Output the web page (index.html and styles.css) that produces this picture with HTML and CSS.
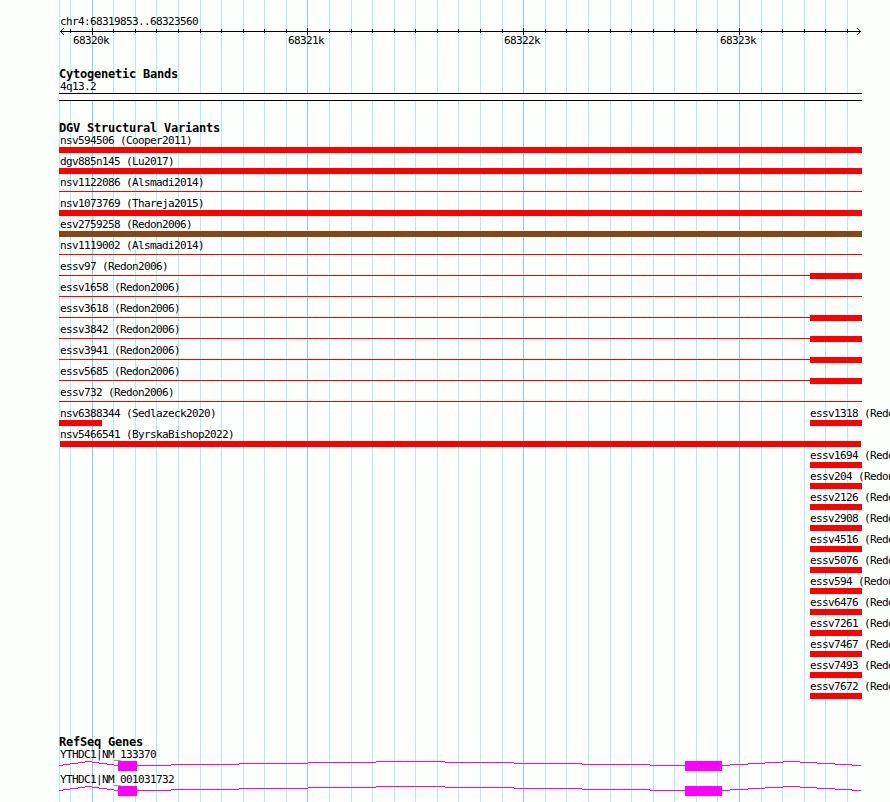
FILE: index.html
```
<!DOCTYPE html>
<html lang="en">
<head>
<meta charset="utf-8">
<title>chr4:68319853..68323560</title>
<link rel="stylesheet" href="styles.css">
</head>
<body>
<svg class="grid" width="890" height="802" shape-rendering="crispEdges" aria-hidden="true">
<path class="minor" d="M59.5 0V802M70.5 0V802M113.5 0V802M135.5 0V802M156.5 0V802M178.5 0V802M200.5 0V802M221.5 0V802M243.5 0V802M264.5 0V802M286.5 0V802M329.5 0V802M351.5 0V802M372.5 0V802M394.5 0V802M415.5 0V802M437.5 0V802M458.5 0V802M480.5 0V802M502.5 0V802M545.5 0V802M566.5 0V802M588.5 0V802M610.5 0V802M631.5 0V802M653.5 0V802M674.5 0V802M696.5 0V802M717.5 0V802M761.5 0V802M782.5 0V802M804.5 0V802M825.5 0V802M847.5 0V802"/>
<path class="major" d="M92.5 0V802M307.5 0V802M523.5 0V802M739.5 0V802"/>
</svg>
<main class="tracks">
<header class="ruler">
<div class="label">chr4:68319853..68323560</div>
<svg class="axis" width="803" height="9" viewBox="59 27 803 9" shape-rendering="crispEdges" aria-hidden="true">
<path d="M60 31.5H861M70.5 29V33M113.5 29V33M135.5 29V33M156.5 29V33M178.5 29V33M200.5 29V33M221.5 29V33M243.5 29V33M264.5 29V33M286.5 29V33M329.5 29V33M351.5 29V33M372.5 29V33M394.5 29V33M415.5 29V33M437.5 29V33M458.5 29V33M480.5 29V33M502.5 29V33M545.5 29V33M566.5 29V33M588.5 29V33M610.5 29V33M631.5 29V33M653.5 29V33M674.5 29V33M696.5 29V33M717.5 29V33M761.5 29V33M782.5 29V33M804.5 29V33M825.5 29V33M847.5 29V33M92.5 28V35M307.5 28V35M523.5 28V35M739.5 28V35"/>
<path d="M61 30.5H62M62 29.5H63M63 28.5H64M61 32.5H62M62 33.5H63M63 34.5H64M859 30.5H860M858 29.5H859M857 28.5H858M859 32.5H860M858 33.5H859M857 34.5H858"/>
</svg>
<div class="scale"><span>68320k</span><span>68321k</span><span>68322k</span><span>68323k</span></div>
</header>
<section class="cyto">
<h2>Cytogenetic Bands</h2>
<div class="label">4q13.2</div>
<div class="band"></div>
</section>
<section class="variants">
<h2>DGV Structural Variants</h2>
<div class="row"><div class="wide"><div class="label">nsv594506 (Cooper2011)</div><div class="bar"></div></div></div>
<div class="row"><div class="wide"><div class="label">dgv885n145 (Lu2017)</div><div class="bar"></div></div></div>
<div class="row"><div class="wide"><div class="label">nsv1122086 (Alsmadi2014)</div><div class="bar thin"></div></div></div>
<div class="row"><div class="wide"><div class="label">nsv1073769 (Thareja2015)</div><div class="bar"></div></div></div>
<div class="row"><div class="wide"><div class="label">esv2759258 (Redon2006)</div><div class="bar brown"></div></div></div>
<div class="row"><div class="wide"><div class="label">nsv1119002 (Alsmadi2014)</div><div class="bar thin"></div></div></div>
<div class="row"><div class="wide"><div class="label">essv97 (Redon2006)</div><div class="bar thin tip"></div></div></div>
<div class="row"><div class="wide"><div class="label">essv1658 (Redon2006)</div><div class="bar thin"></div></div></div>
<div class="row"><div class="wide"><div class="label">essv3618 (Redon2006)</div><div class="bar thin tip"></div></div></div>
<div class="row"><div class="wide"><div class="label">essv3842 (Redon2006)</div><div class="bar thin tip"></div></div></div>
<div class="row"><div class="wide"><div class="label">essv3941 (Redon2006)</div><div class="bar thin tip"></div></div></div>
<div class="row"><div class="wide"><div class="label">essv5685 (Redon2006)</div><div class="bar thin tip"></div></div></div>
<div class="row"><div class="wide"><div class="label">essv732 (Redon2006)</div><div class="bar thin"></div></div></div>
<div class="row"><div class="left"><div class="label">nsv6388344 (Sedlazeck2020)</div><div class="bar short"></div></div><div class="right"><div class="label">essv1318 (Redon2006)</div><div class="bar"></div></div></div>
<div class="row"><div class="wide"><div class="label">nsv5466541 (ByrskaBishop2022)</div><div class="bar inset"></div></div></div>
<div class="row"><div class="right"><div class="label">essv1694 (Redon2006)</div><div class="bar"></div></div></div>
<div class="row"><div class="right"><div class="label">essv204 (Redon2006)</div><div class="bar"></div></div></div>
<div class="row"><div class="right"><div class="label">essv2126 (Redon2006)</div><div class="bar"></div></div></div>
<div class="row"><div class="right"><div class="label">essv2908 (Redon2006)</div><div class="bar"></div></div></div>
<div class="row"><div class="right"><div class="label">essv4516 (Redon2006)</div><div class="bar"></div></div></div>
<div class="row"><div class="right"><div class="label">essv5076 (Redon2006)</div><div class="bar"></div></div></div>
<div class="row"><div class="right"><div class="label">essv594 (Redon2006)</div><div class="bar"></div></div></div>
<div class="row"><div class="right"><div class="label">essv6476 (Redon2006)</div><div class="bar"></div></div></div>
<div class="row"><div class="right"><div class="label">essv7261 (Redon2006)</div><div class="bar"></div></div></div>
<div class="row"><div class="right"><div class="label">essv7467 (Redon2006)</div><div class="bar"></div></div></div>
<div class="row"><div class="right"><div class="label">essv7493 (Redon2006)</div><div class="bar"></div></div></div>
<div class="row"><div class="right"><div class="label">essv7672 (Redon2006)</div><div class="bar"></div></div></div>
</section>
<section class="genes">
<h2>RefSeq Genes</h2>
<div class="gene"><div class="label">YTHDC1|NM_133370</div>
<svg width="803" height="10" viewBox="59 761 803 10" shape-rendering="crispEdges" aria-hidden="true"><defs><g id="model">
<path class="intron" d="M59 765.5H63M63 764.5H70M70 763.5H78M78 762.5H85M85 761.5H92M92 762.5H99M99 763.5H107M107 764.5H114M114 765.5H118M137 765.5H171M171 764.5H239M239 763.5H308M308 762.5H376M376 761.5H445M445 762.5H514M514 763.5H582M582 764.5H650M650 765.5H685M722 765.5H730M730 764.5H748M748 763.5H765M765 762.5H783M783 761.5H800M800 762.5H817M817 763.5H835M835 764.5H852M852 765.5H861"/>
<path class="exon" d="M118 761h19v10h-19zM685 761h37v10h-37z"/></g></defs><use href="#model"/></svg></div>
<div class="gene"><div class="label">YTHDC1|NM_001031732</div>
<svg width="803" height="10" viewBox="59 761 803 10" shape-rendering="crispEdges" aria-hidden="true"><use href="#model"/></svg></div>
</section>
</main>
</body>
</html>
```

FILE: styles.css
```
body {
  margin: 0;
  width: 890px;
  height: 802px;
  overflow: hidden;
  position: relative;
  background: #fdfffc;
  color: #000;
  font: 11px/13px "DejaVu Sans Mono", monospace;
  letter-spacing: -0.622px;
}
svg { display: block; }
.grid { position: absolute; left: 0; top: 0; }
.minor { stroke: #afeeee; }
.major { stroke: #87ceeb; }
.tracks { position: relative; padding: 15px 0 0 59px; }
.label { height: 13px; padding-left: 1px; white-space: pre; }
.ruler { height: 53px; }
.ruler .label { height: 12px; }
.axis path { stroke: #000; fill: none; }
.scale {
  display: grid;
  grid-template-columns: 215px 216px 216px 80px;
  padding-left: 14px;
  margin-top: -2px;
}
h2 {
  margin: 0;
  height: 12px;
  font-size: 12px;
  line-height: 13px;
  font-weight: bold;
  letter-spacing: -0.224px;
}
.cyto { height: 54px; }
.band {
  box-sizing: border-box;
  width: 803px;
  height: 8px;
  background: #fff;
  border: solid #000;
  border-width: 1px 0;
}
.variants { height: 614px; }
.row {
  display: grid;
  grid-template-columns: 751px 52px;
  height: 21px;
}
.wide { grid-column: 1 / 3; }
.left { grid-column: 1; }
.right { grid-column: 2; }
.right .label { padding-left: 0; }
.bar { height: 6px; background: #f00; }
.brown { background: #8b4513; }
.short { width: 43px; }
.inset { margin: 0 1px; }
.thin { background: linear-gradient(#f00, #f00) 0 2px / 100% 1px no-repeat; }
.tip {
  background:
    linear-gradient(#f00, #f00) 0 2px / 100% 1px no-repeat,
    linear-gradient(#f00, #f00) 100% 0 / 52px 6px no-repeat;
}
.gene { height: 25px; }
.intron { stroke: #f0f; }
.exon { fill: #f0f; }
```
